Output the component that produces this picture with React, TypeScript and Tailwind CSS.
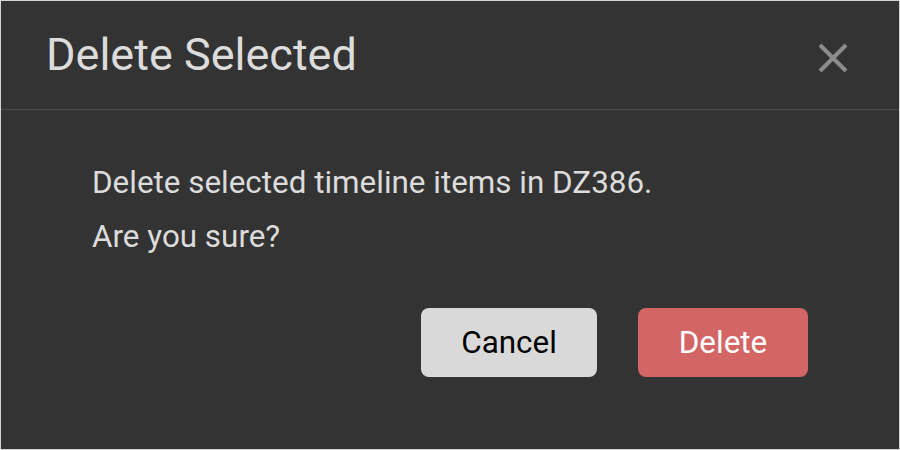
export default function App() {
    return (
        <div
            className="w-[900px] h-[450px] bg-[#333333] border border-[#d4d4d4] flex flex-col"
            style={{ fontFamily: 'Roboto, "Liberation Sans", sans-serif' }}
        >
            <div className="h-[109px] shrink-0 flex items-center justify-between pl-[45px] pr-[50px] border-b border-[#4a4a4a]">
                <h2 className="text-[45px] leading-none text-[#dcdcdc] pb-[2px]">Delete Selected</h2>
                <button className="w-[32px] h-[32px] flex items-center justify-center mt-[6px]">
                    <svg width="32" height="32" viewBox="0 0 32 32">
                        <path d="M3 3 L29 29 M29 3 L3 29" stroke="#8c8c8c" strokeWidth="4" />
                    </svg>
                </button>
            </div>
            <div className="flex-1 flex flex-col px-[91px] pt-[46px]">
                <p className="text-[31.4px] leading-[54px] text-[#dcdcdc]">Delete selected timeline items in DZ386.</p>
                <p className="text-[31.4px] leading-[54px] text-[#dcdcdc]">Are you sure?</p>
                <div className="flex justify-end gap-[41px] mt-[44px]">
                    <button className="w-[176px] h-[69px] rounded-[8px] bg-[#d9d9d9] text-[31.4px] text-black">Cancel</button>
                    <button className="w-[170px] h-[69px] rounded-[8px] bg-[#d36565] text-[31.4px] text-white">Delete</button>
                </div>
            </div>
        </div>
    );
}
